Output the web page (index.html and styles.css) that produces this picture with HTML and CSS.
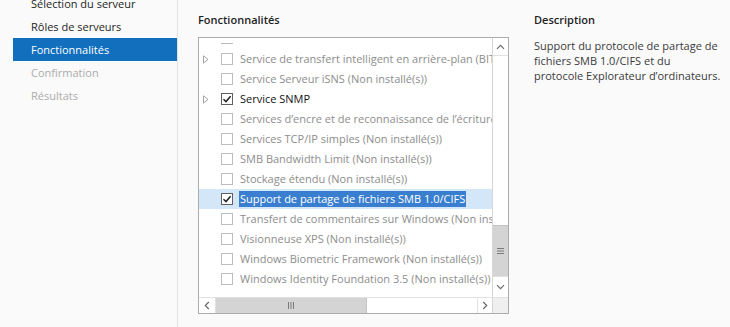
FILE: index.html
```html
<!DOCTYPE html>
<html lang="fr">
<head>
<meta charset="utf-8">
<link rel="stylesheet" href="styles.css">
</head>
<body>
<div class="app">
  <nav class="nav">
    <div class="nav-item">Sélection du serveur</div>
    <div class="nav-item">Rôles de serveurs</div>
    <div class="nav-item active">Fonctionnalités</div>
    <div class="nav-item disabled">Confirmation</div>
    <div class="nav-item disabled">Résultats</div>
  </nav>
  <main class="main">
    <section class="features">
      <h2 class="title">Fonctionnalités</h2>
      <div class="listbox">
        <div class="lb-body">
          <div class="lb-view">
            <div class="row-partial"><span class="cb-edge"></span></div>
            <div class="row">
              <span class="exp"><svg width="6" height="9" viewBox="0 0 6 9"><path d="M0.5 0.8 L5 4.5 L0.5 8.2 Z" fill="none" stroke="#a6a6a6"/></svg></span>
              <span class="cb"></span><span class="label">Service de transfert intelligent en arrière-plan (BITS) (Non installé(s))</span>
            </div>
            <div class="row">
              <span class="exp"></span>
              <span class="cb"></span><span class="label">Service Serveur iSNS (Non installé(s))</span>
            </div>
            <div class="row installed">
              <span class="exp"><svg width="6" height="9" viewBox="0 0 6 9"><path d="M0.5 0.8 L5 4.5 L0.5 8.2 Z" fill="none" stroke="#a6a6a6"/></svg></span>
              <span class="cb checked"><svg width="10" height="10" viewBox="0 0 10 10"><path d="M1.5 5.2 L4 7.6 L8.6 2.2" fill="none" stroke="#222" stroke-width="1.5"/></svg></span><span class="label">Service SNMP</span>
            </div>
            <div class="row">
              <span class="exp"></span>
              <span class="cb"></span><span class="label">Services d’encre et de reconnaissance de l’écriture manuscrite (Non installé(s))</span>
            </div>
            <div class="row">
              <span class="exp"></span>
              <span class="cb"></span><span class="label">Services TCP/IP simples (Non installé(s))</span>
            </div>
            <div class="row">
              <span class="exp"></span>
              <span class="cb"></span><span class="label">SMB Bandwidth Limit (Non installé(s))</span>
            </div>
            <div class="row">
              <span class="exp"></span>
              <span class="cb"></span><span class="label">Stockage étendu (Non installé(s))</span>
            </div>
            <div class="row installed selected">
              <span class="exp"></span>
              <span class="cb checked"><svg width="10" height="10" viewBox="0 0 10 10"><path d="M1.5 5.2 L4 7.6 L8.6 2.2" fill="none" stroke="#222" stroke-width="1.5"/></svg></span><span class="label">Support de partage de fichiers SMB 1.0/CIFS</span>
            </div>
            <div class="row">
              <span class="exp"></span>
              <span class="cb"></span><span class="label">Transfert de commentaires sur Windows (Non installé(s))</span>
            </div>
            <div class="row">
              <span class="exp"></span>
              <span class="cb"></span><span class="label">Visionneuse XPS (Non installé(s))</span>
            </div>
            <div class="row">
              <span class="exp"></span>
              <span class="cb"></span><span class="label">Windows Biometric Framework (Non installé(s))</span>
            </div>
            <div class="row">
              <span class="exp"></span>
              <span class="cb"></span><span class="label">Windows Identity Foundation 3.5 (Non installé(s))</span>
            </div>
          </div>
          <div class="vscroll">
            <div class="sb-btn up"><svg width="9" height="6" viewBox="0 0 9 6"><path d="M1 4.8 L4.5 1.3 L8 4.8" fill="none" stroke="#6a6a6a" stroke-width="1.2"/></svg></div>
            <div class="v-track"><div class="v-thumb"><svg width="7" height="6" viewBox="0 0 7 6"><path d="M0 0.5 H7 M0 3 H7 M0 5.5 H7" stroke="#7a7a7a"/></svg></div></div>
            <div class="sb-btn down"><svg width="9" height="6" viewBox="0 0 9 6"><path d="M1 1.2 L4.5 4.7 L8 1.2" fill="none" stroke="#6a6a6a" stroke-width="1.2"/></svg></div>
          </div>
        </div>
        <div class="hscroll">
          <div class="sb-hbtn left"><svg width="6" height="9" viewBox="0 0 6 9"><path d="M4.8 1 L1.3 4.5 L4.8 8" fill="none" stroke="#6a6a6a" stroke-width="1.2"/></svg></div>
          <div class="h-track"><div class="h-thumb"><svg width="6" height="7" viewBox="0 0 6 7"><path d="M0.5 0 V7 M3 0 V7 M5.5 0 V7" stroke="#7a7a7a"/></svg></div></div>
          <div class="sb-hbtn right"><svg width="6" height="9" viewBox="0 0 6 9"><path d="M1.2 1 L4.7 4.5 L1.2 8" fill="none" stroke="#6a6a6a" stroke-width="1.2"/></svg></div>
          <div class="corner"></div>
        </div>
      </div>
    </section>
    <aside class="desc">
      <h2 class="title">Description</h2>
      <p class="desc-text">Support du protocole de partage de fichiers SMB 1.0/CIFS et du protocole Explorateur d’ordinateurs.</p>
    </aside>
  </main>
</div>
</body>
</html>
```
FILE: styles.css
```css
html, body {
  margin: 0;
  padding: 0;
  height: 100%;
  overflow: hidden;
  background: #fafafa;
}
body {
  font-family: "Open Sans", "Noto Sans", sans-serif;
  font-size: 11px;
  color: #1e1e1e;
}
.app {
  display: flex;
  height: 100%;
}
.nav {
  width: 177px;
  flex: none;
  border-right: 1px solid #e2e2e2;
  margin-top: -8px;
}
.nav-item {
  height: 23px;
  line-height: 23px;
  margin-left: 13px;
  padding-left: 18px;
  white-space: nowrap;
  color: #1e1e1e;
}
.nav-item.active {
  background: #116fbe;
  color: #fff;
}
.nav-item.disabled {
  color: #ababab;
}
.main {
  display: flex;
  padding: 12px 0 0 20px;
  gap: 25px;
}
.features {
  width: 311px;
  flex: none;
}
.title {
  margin: 0;
  font-size: 11px;
  font-weight: 600;
  line-height: 15px;
  height: 15px;
  color: #1e1e1e;
}
.features .title {
  margin-bottom: 10px;
}
.listbox {
  border: 1px solid #acacac;
  background: #fff;
  display: flex;
  flex-direction: column;
}
.lb-body {
  display: flex;
  height: 259px;
}
.lb-view {
  flex: 1;
  overflow: hidden;
  padding-top: 5px;
}
.row-partial {
  height: 6px;
  padding-left: 22px;
}
.cb-edge {
  display: block;
  width: 12px;
  height: 1px;
  background: #b9b9b9;
}
.row {
  height: 20px;
  display: flex;
  align-items: center;
  white-space: nowrap;
  color: #8d8d8d;
}
.row.installed {
  color: #111;
}
.row.selected {
  background: #d3e7f9;
}
.row.selected .label {
  background: #3a7fcf;
  color: #fff;
  padding: 0 1px;
  margin-left: -1px;
  line-height: 16px;
}
.exp {
  width: 22px;
  flex: none;
  padding-left: 4px;
  box-sizing: border-box;
  display: flex;
  align-items: center;
  height: 20px;
}
.cb {
  width: 12px;
  height: 12px;
  box-sizing: border-box;
  border: 1px solid #bdbdbd;
  background: #fff;
  flex: none;
  margin-right: 7px;
  display: flex;
  align-items: center;
  justify-content: center;
}
.cb.checked {
  border-color: #5f5f5f;
}
.label {
  line-height: 20px;
}
.vscroll {
  width: 15px;
  flex: none;
  border-left: 1px solid #d6d6d6;
  display: flex;
  flex-direction: column;
  background: #fff;
}
.sb-btn {
  height: 17px;
  display: flex;
  align-items: center;
  justify-content: center;
  flex: none;
}
.sb-btn.up {
  border-bottom: 1px solid #e1e1e1;
}
.sb-btn.down {
  height: 20px;
  border-top: 1px solid #e1e1e1;
}
.v-track {
  flex: 1;
  display: flex;
  flex-direction: column;
  justify-content: flex-end;
}
.v-thumb {
  height: 50px;
  background: #d4d4d4;
  border-top: 1px solid #c4c4c4;
  display: flex;
  align-items: center;
  justify-content: center;
}
.hscroll {
  height: 15px;
  border-top: 1px solid #e1e1e1;
  display: flex;
  background: #fff;
}
.sb-hbtn {
  width: 16px;
  flex: none;
  display: flex;
  align-items: center;
  justify-content: center;
}
.sb-hbtn.left {
  border-right: 1px solid #e1e1e1;
}
.sb-hbtn.right {
  width: 14px;
  border-left: 1px solid #e1e1e1;
}
.h-track {
  flex: 1;
  display: flex;
}
.h-thumb {
  width: 150px;
  background: #d4d4d4;
  border-right: 1px solid #c4c4c4;
  display: flex;
  align-items: center;
  justify-content: center;
}
.corner {
  width: 15px;
  flex: none;
  border-left: 1px solid #d6d6d6;
  background: #efefef;
}
.desc {
  width: 190px;
  flex: none;
}
.desc-text {
  margin: 11px 0 0;
  line-height: 15px;
  color: #3a3a3a;
  width: 188px;
}
```
